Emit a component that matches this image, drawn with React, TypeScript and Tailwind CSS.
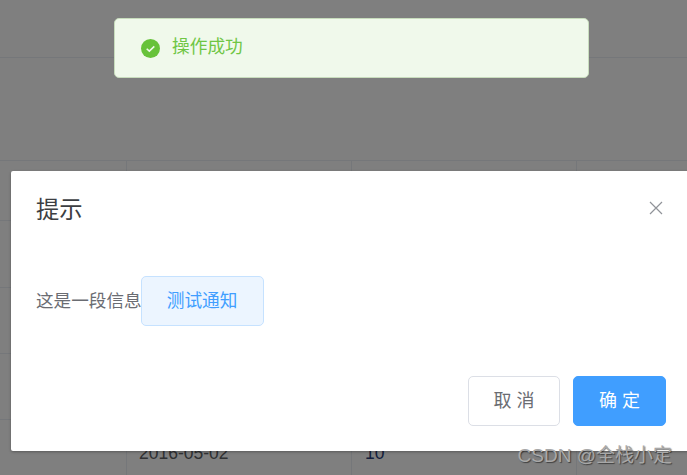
import React from "react";

const cols = "grid grid-cols-[127px_225px_225px_1fr]";

function TableRow({ date, num, h }: { date?: string; num?: string; h: string }) {
  return (
    <div className={`${cols} ${h} border-b border-[#ebeef5] text-[17.5px] text-[#606266]`}>
      <div className="border-r border-[#ebeef5]" />
      <div className="border-r border-[#ebeef5] pl-[12px] pt-[20px]">{date}</div>
      <div className="border-r border-[#ebeef5] pl-[13px] pt-[20px] text-[#2a3f7a]">{num}</div>
      <div />
    </div>
  );
}

export default function App() {
  return (
    <div className="relative h-[475px] w-[687px] overflow-hidden bg-white font-['Liberation_Sans','Noto_Sans_CJK_SC',sans-serif]">
      {/* table behind the mask */}
      <div className="h-[58px] border-b border-[#ebeef5]" />
      <div className="h-[103px] border-b border-[#ebeef5]" />
      <TableRow h="h-[60px]" />
      <TableRow h="h-[67px]" />
      <TableRow h="h-[66px]" />
      <TableRow h="h-[66px]" />
      <TableRow h="h-[60px]" date="2016-05-02" num="10" />

      <div className="absolute inset-0 bg-black/50" />

      {/* toast */}
      <div className="absolute left-[114px] top-[18px] flex h-[60px] w-[475px] items-center rounded-[5px] border border-[#c8ddbd] bg-[#f0f9eb] pl-[26px]">
        <svg width="19" height="19" viewBox="0 0 18 18" className="mr-[12px]">
          <circle cx="9" cy="9" r="9" fill="#67c23a" />
          <path d="M5.4 9.2 L7.9 11.5 L12.6 7" fill="none" stroke="#f0f9eb" strokeWidth="1.5" />
        </svg>
        <span className="-mt-[2px] text-[17.7px] text-[#6fc644]">操作成功</span>
      </div>

      {/* dialog */}
      <div className="absolute left-[11px] top-[171px] h-[280px] w-[690px] rounded-[2px] bg-white shadow-[0_1px_3px_rgba(0,0,0,0.3)]">
        <div className="flex items-start justify-between pl-[25px] pr-[38px] pt-[24px]">
          <span className="text-[23.3px] leading-[30px] text-[#3c3e42]">提示</span>
          <svg width="14" height="14" viewBox="0 0 14 14" className="mt-[6px]">
            <path d="M1 1 L13 13 M13 1 L1 13" stroke="#909399" strokeWidth="1.2" />
          </svg>
        </div>
        <div className="flex items-center pl-[25px] pt-[51px]">
          <span className="text-[17.6px] text-[#6a6c72]">这是一段信息</span>
          <button className="-ml-px h-[50px] w-[123px] rounded-[5px] border border-[#c6e2ff] bg-[#ecf5ff] text-[17.7px] text-[#409eff]">
            测试通知
          </button>
        </div>
        <div className="flex justify-end gap-[13px] pr-[35px] pt-[50px]">
          <button className="h-[50px] w-[92px] rounded-[5px] border border-[#dcdfe6] bg-white text-[18px] text-[#6a6c72]">
            取 消
          </button>
          <button className="h-[50px] w-[93px] rounded-[5px] border border-[#409eff] bg-[#409eff] text-[18px] text-white">
            确 定
          </button>
        </div>
      </div>

      {/* watermark */}
      <div className="absolute right-[15px] top-[445px] text-[19px] leading-[22px] text-[#a8a8a8] [text-shadow:1px_1px_1px_rgba(0,0,0,0.5)]">
        CSDN @全栈小定
      </div>
    </div>
  );
}
